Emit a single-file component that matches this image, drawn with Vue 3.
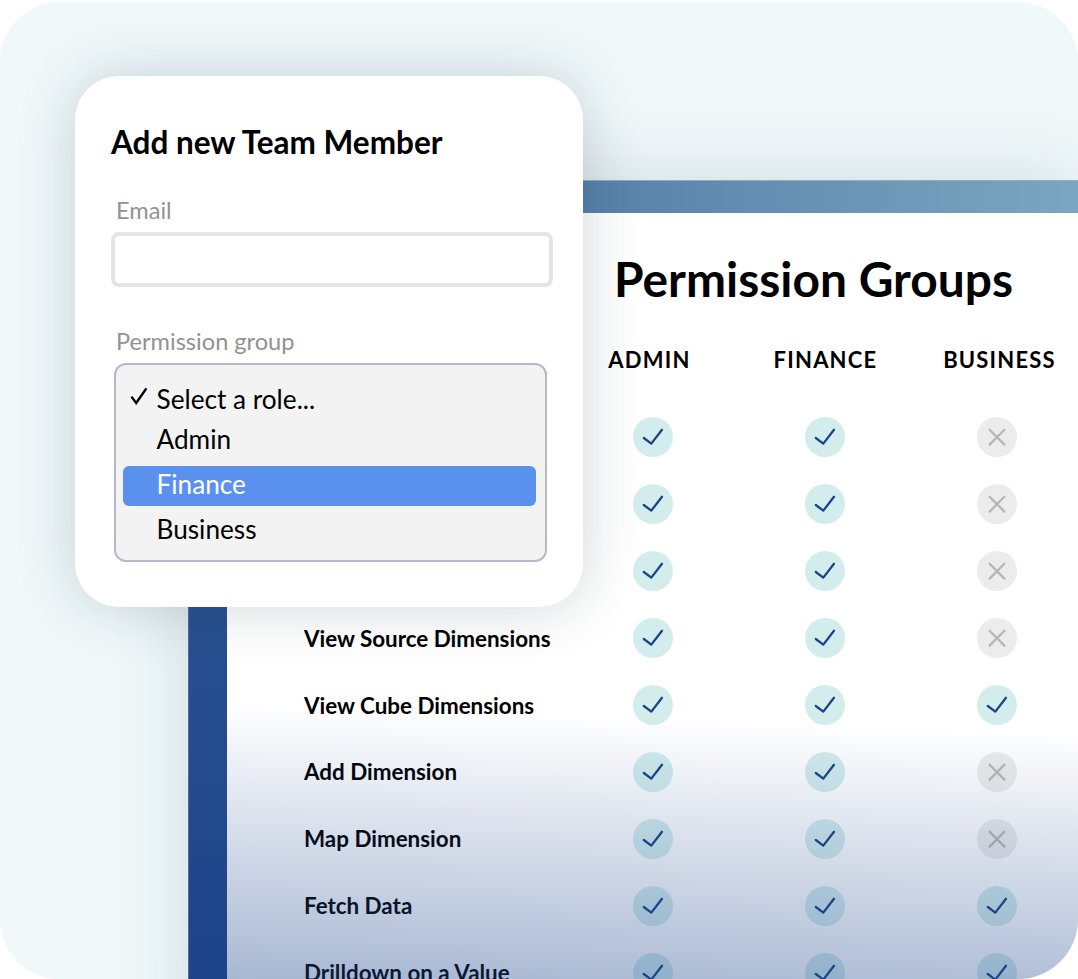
<script setup>
const columns = ['ADMIN', 'FINANCE', 'BUSINESS']
const rows = [
  { label: '', access: [true, true, false] },
  { label: '', access: [true, true, false] },
  { label: '', access: [true, true, false] },
  { label: 'View Source Dimensions', access: [true, true, false] },
  { label: 'View Cube Dimensions', access: [true, true, true] },
  { label: 'Add Dimension', access: [true, true, false] },
  { label: 'Map Dimension', access: [true, true, false] },
  { label: 'Fetch Data', access: [true, true, true] },
  { label: 'Drilldown on a Value', access: [true, true, true] },
]
const options = [
  { label: 'Select a role...', checked: true },
  { label: 'Admin' },
  { label: 'Finance', active: true },
  { label: 'Business' },
]
</script>

<template>
  <div class="stage">
    <section class="window">
      <div class="topbar"></div>
      <div class="window-body">
        <aside class="sidebar"></aside>
        <main class="content">
          <h1 class="page-title">Permission Groups</h1>
          <div class="table-head">
            <span v-for="c in columns" :key="c" class="col-name">{{ c }}</span>
          </div>
          <div v-for="(row, i) in rows" :key="i" class="row">
            <span class="row-label">{{ row.label }}</span>
            <span v-for="(ok, j) in row.access" :key="j" class="cell">
              <svg v-if="ok" class="badge" viewBox="0 0 40 40" width="40" height="40">
                <circle cx="20" cy="20" r="20" fill="#d3eded" />
                <path d="M10.8 21 L18.3 26.6 L29 12.8" fill="none" stroke="#1c4289" stroke-width="2.3" stroke-linecap="round" stroke-linejoin="round" />
              </svg>
              <svg v-else class="badge" viewBox="0 0 40 40" width="40" height="40">
                <circle cx="20" cy="20" r="20" fill="#ececec" />
                <path d="M12.6 12.8 L27.4 27.6 M27.4 12.8 L12.6 27.6" fill="none" stroke="#b6b6b6" stroke-width="2.3" stroke-linecap="round" />
              </svg>
            </span>
          </div>
          <div class="fade"></div>
        </main>
      </div>
    </section>

    <form class="modal" @submit.prevent>
      <h2 class="modal-title">Add new Team Member</h2>
      <label class="field-label email-label">Email</label>
      <div class="input"></div>
      <label class="field-label group-label">Permission group</label>
      <ul class="listbox">
        <li
          v-for="o in options"
          :key="o.label"
          class="option"
          :class="{ active: o.active, first: o.checked }"
        >
          <svg v-if="o.checked" class="tick" viewBox="0 0 18 18" width="18" height="18">
            <path d="M1.4 9.6 L6.2 16 L16.4 1.4" fill="none" stroke="#000" stroke-width="2.4" />
          </svg>
          {{ o.label }}
        </li>
      </ul>
    </form>
  </div>
</template>

<style>
html, body { margin: 0; background: #fff; }
</style>

<style scoped>
.stage {
  position: relative;
  width: 1078px;
  height: 977px;
  margin-top: 2px;
  box-sizing: border-box;
  padding: 178px 0 0 188px;
  background: #f0f8fa;
  border-radius: 60px;
  overflow: hidden;
  font-family: Lato, "Liberation Sans", sans-serif;
  color: #000;
}
.window {
  height: 860px;
  background: #fff;
  box-shadow: 0 0 70px rgba(40, 60, 70, 0.16);
}
.topbar {
  height: 33px;
  background: linear-gradient(90deg, #3a6496 0%, #7ca5c1 100%);
  border-top: 1px solid #8eadc7;
  box-sizing: border-box;
}
.window-body { display: flex; height: 827px; }
.sidebar {
  width: 39px;
  flex: none;
  background: linear-gradient(180deg, #345f99 0%, #1b4187 100%);
  border-left: 1px solid #4a6ea6;
  box-sizing: border-box;
}
.content {
  position: relative;
  flex: 1;
  padding-top: 39px;
}
.page-title {
  margin: 0 0 0 387px;
  width: 398px;
  font-size: 47.9px;
  font-weight: 700;
  line-height: 54px;
  white-space: nowrap;
}
.table-head {
  display: grid;
  grid-template-columns: 339.5px 172px 172px 172px;
  margin-top: 39px;
  height: 59px;
}
.col-name {
  font-size: 22px;
  font-weight: 700;
  letter-spacing: 1.2px;
  line-height: 30px;
  text-align: center;
}
.col-name:first-child { grid-column: 2; margin-left: -6px; }
.col-name:nth-child(2) { margin-left: 2px; }
.col-name:nth-child(3) { margin-left: 6px; }
.row {
  display: grid;
  grid-template-columns: 339.5px 172px 172px 172px;
  align-items: center;
  height: 66.9px;
}
.row-label {
  padding-left: 77px;
  font-size: 22.4px;
  font-weight: 700;
  white-space: nowrap;
}
.cell { display: flex; justify-content: center; }
.badge { display: block; }
.fade {
  position: absolute;
  left: 0;
  right: 0;
  top: 490px;
  bottom: 0;
  background: linear-gradient(182deg, rgba(30, 70, 140, 0) 8%, rgba(30, 70, 140, 0.47) 100%);
  pointer-events: none;
}
.modal {
  position: absolute;
  left: 75px;
  top: 74px;
  width: 508px;
  height: 531px;
  box-sizing: border-box;
  padding: 46px 30px 0 36px;
  background: #fff;
  border-radius: 44px;
  box-shadow: 0 0 60px rgba(30, 50, 60, 0.2);
}
.modal-title {
  margin: 0;
  font-size: 31.5px;
  font-weight: 700;
  line-height: 40px;
}
.field-label {
  display: block;
  margin-left: 5px;
  font-size: 23.6px;
  line-height: 30px;
  color: #949191;
}
.email-label { margin-top: 33px; }
.input {
  margin-top: 7px;
  height: 55px;
  box-sizing: border-box;
  border: 4px solid #e4e4e4;
  border-radius: 8px;
  background: #fff;
}
.group-label { margin-top: 39px; }
.listbox {
  list-style: none;
  margin: 7px 6px 0 3px;
  padding: 14px 9px 0 7px;
  height: 199px;
  box-sizing: border-box;
  border: 2px solid #b5b9c9;
  border-radius: 12px;
  background: #f3f3f3;
}
.option {
  position: relative;
  height: 40.5px;
  padding-left: 33.5px;
  font-size: 26.2px;
  line-height: 38px;
  color: #000;
}
.option.first { line-height: 40px; }
.option.active {
  height: 40px;
  margin: 6px 0 3.5px;
  background: #5b91ee;
  border-radius: 6px;
  color: #fff;
  line-height: 36px;
}
.tick {
  position: absolute;
  left: 7px;
  top: 8px;
}
</style>
